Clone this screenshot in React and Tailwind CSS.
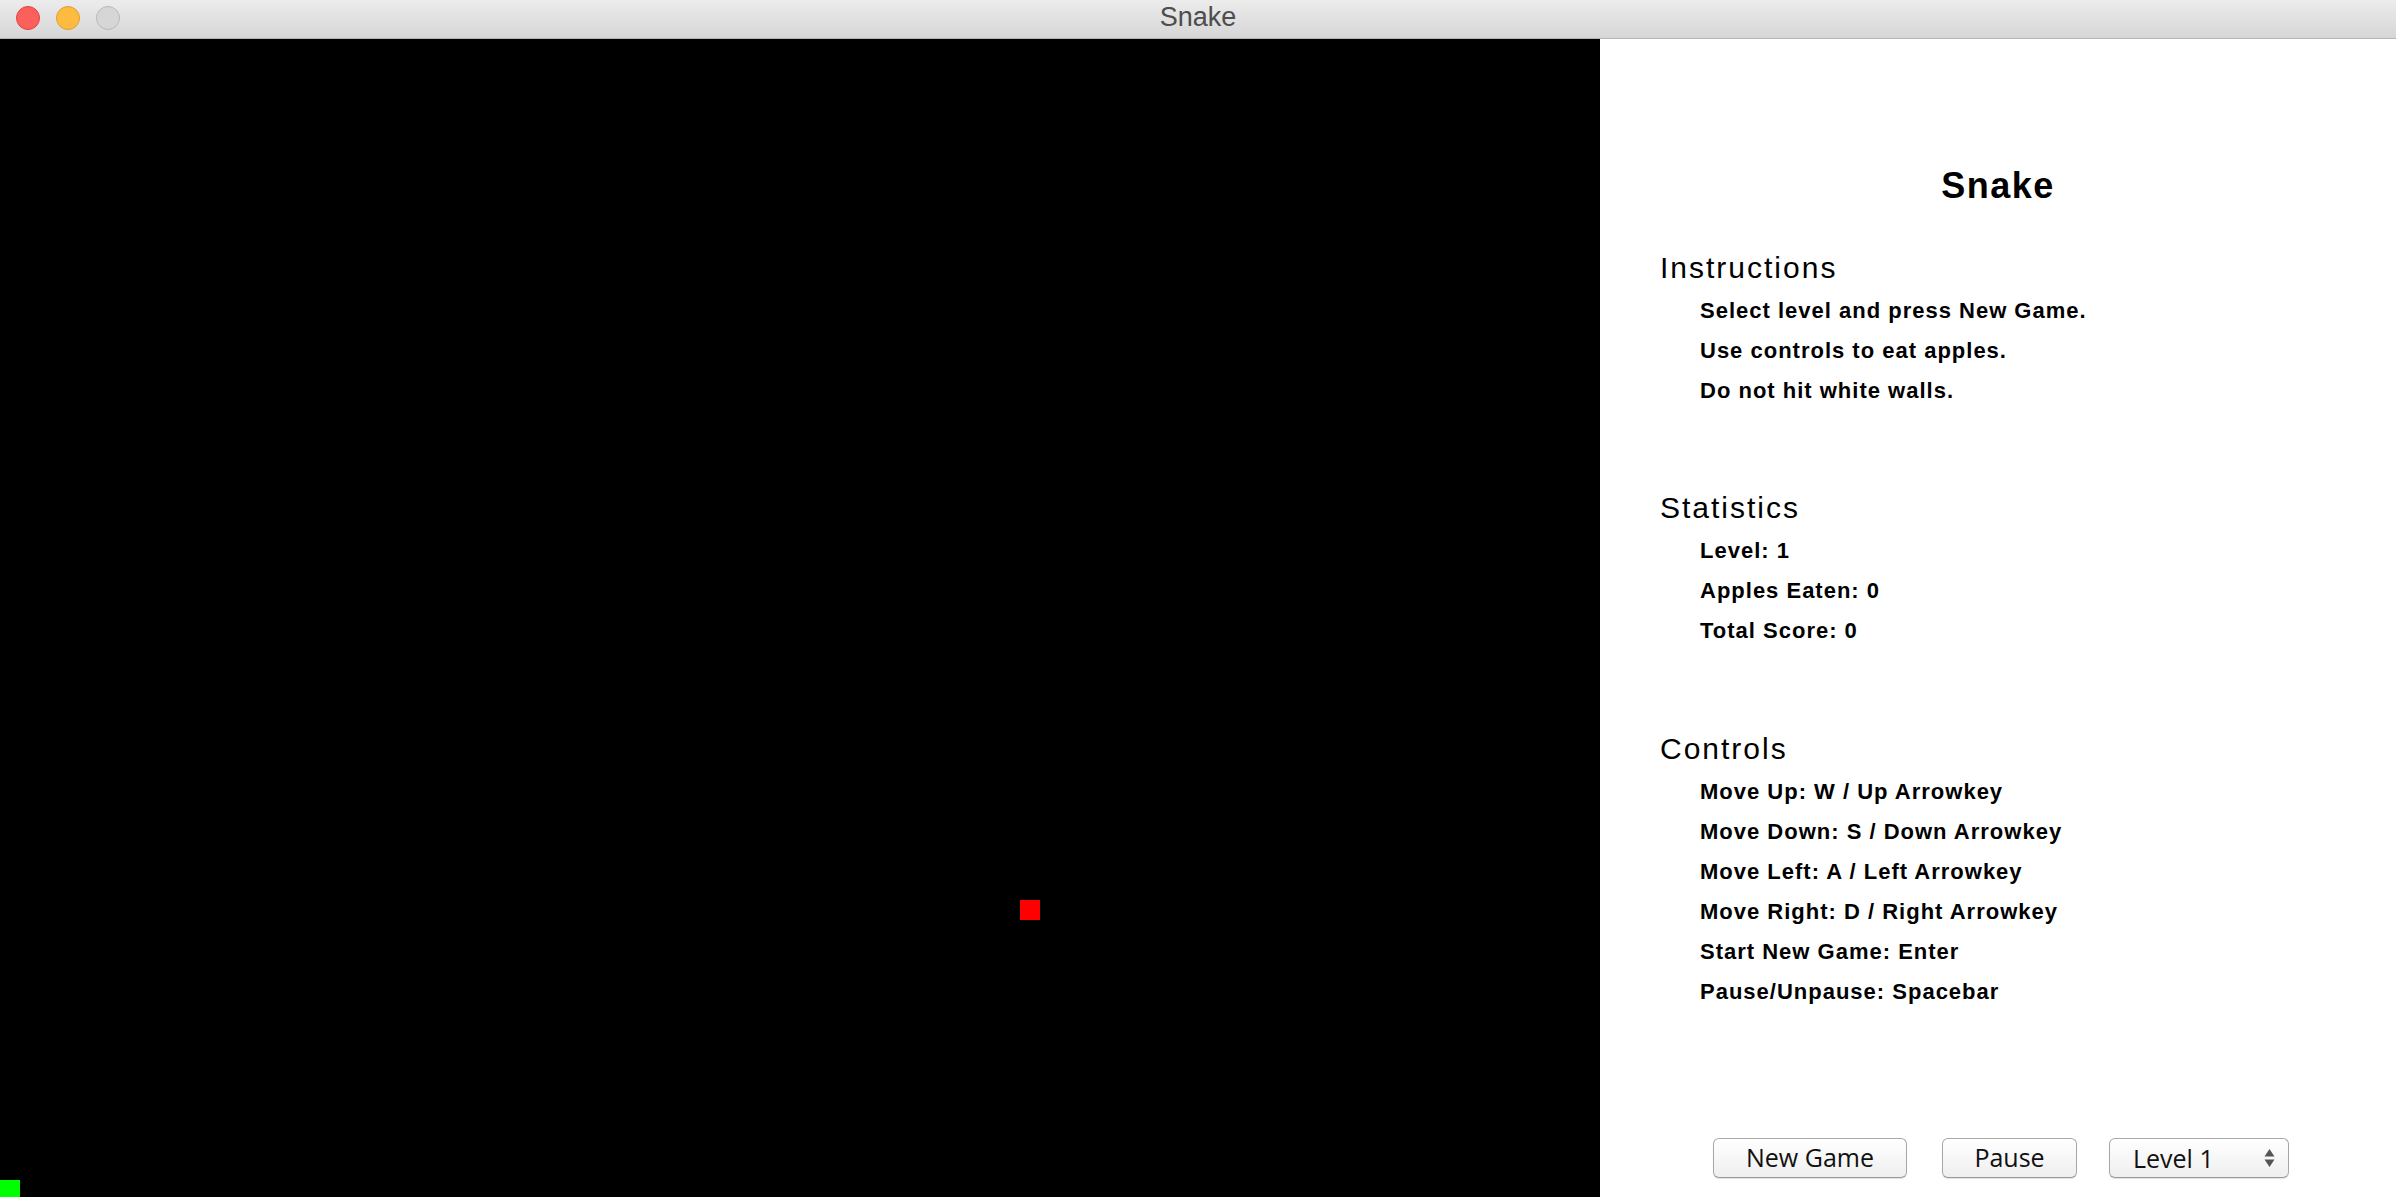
import React from "react";

const sans = { fontFamily: '"Liberation Sans", Arial, Helvetica, sans-serif' };
const btnFont = { fontFamily: '"Open Sans", "DejaVu Sans", sans-serif' };

function Section({ title, items }) {
  return (
    <div className="flex flex-col">
      <div className="text-[30px] leading-[46px] tracking-[2px] text-black">{title}</div>
      <div className="flex flex-col pl-10">
        {items.map((t) => (
          <div key={t} className="text-[22px] leading-[40px] font-bold tracking-[1px] text-black whitespace-nowrap">
            {t}
          </div>
        ))}
      </div>
    </div>
  );
}

function MacButton({ children, className = "" }) {
  return (
    <button
      className={
        "h-[40px] rounded-[6px] border border-[#a8a8a8] border-b-[#999999] bg-gradient-to-b from-white to-[#efefef] shadow-[0_1px_1px_rgba(0,0,0,0.12)] text-[25px] leading-none text-[#111] flex items-center justify-center " +
        className
      }
      style={btnFont}
    >
      {children}
    </button>
  );
}

export default function App() {
  return (
    <div className="w-[2396px] h-[1197px] flex flex-col bg-white overflow-hidden" style={sans}>
      {/* Title bar */}
      <div className="relative h-[39px] shrink-0 bg-gradient-to-b from-[#ececec] to-[#d6d6d6] border-b border-[#b4b4b4] flex items-center justify-center">
        <div className="absolute left-[16px] top-[6px] flex gap-[16px]">
          <div className="w-[24px] h-[24px] rounded-full bg-[#fc605c] border border-[#e0443e]" />
          <div className="w-[24px] h-[24px] rounded-full bg-[#fdbc40] border border-[#de9f34]" />
          <div className="w-[24px] h-[24px] rounded-full bg-[#d6d6d6] border border-[#b8b8b8]" />
        </div>
        <div className="text-[27px] leading-[35px] text-[#4d4d4d] -mt-[3px]">Snake</div>
      </div>

      {/* Body */}
      <div className="flex flex-1 min-h-0">
        {/* Game canvas */}
        <div className="relative w-[1600px] h-full bg-black overflow-hidden shrink-0">
          <div className="absolute left-[1020px] top-[861px] w-[20px] h-[20px] bg-[#ff0000]" />
          <div className="absolute left-0 top-[1141px] w-[20px] h-[20px] bg-[#00ff00]" />
        </div>

        {/* Side panel */}
        <div className="flex-1 flex flex-col bg-white">
          <div className="flex-1 flex flex-col pt-[125px] pl-[60px]">
            <div className="w-[676px] text-center text-[36px] leading-[44px] font-bold tracking-[1.5px] text-black">
              Snake
            </div>
            <div className="mt-[37px]">
              <Section
                title="Instructions"
                items={[
                  "Select level and press New Game.",
                  "Use controls to eat apples.",
                  "Do not hit white walls.",
                ]}
              />
            </div>
            <div className="mt-[74px]">
              <Section title="Statistics" items={["Level: 1", "Apples Eaten: 0", "Total Score: 0"]} />
            </div>
            <div className="mt-[75px]">
              <Section
                title="Controls"
                items={[
                  "Move Up: W / Up Arrowkey",
                  "Move Down: S / Down Arrowkey",
                  "Move Left: A / Left Arrowkey",
                  "Move Right: D / Right Arrowkey",
                  "Start New Game: Enter",
                  "Pause/Unpause: Spacebar",
                ]}
              />
            </div>
          </div>

          <div className="flex items-center pl-[113px] pb-[19px]">
            <MacButton className="w-[194px]">New Game</MacButton>
            <MacButton className="w-[135px] ml-[35px]">Pause</MacButton>
            <div
              className="ml-[32px] w-[180px] h-[40px] mt-[1px] rounded-[6px] border border-[#a8a8a8] border-b-[#999999] bg-gradient-to-b from-white to-[#efefef] shadow-[0_1px_1px_rgba(0,0,0,0.12)] flex items-center pl-[23px] pr-[13px] text-[25px] leading-none text-[#111]"
              style={btnFont}
            >
              <span className="flex-1">Level 1</span>
              <svg width="11" height="24" viewBox="0 0 11 24" className="shrink-0">
                <path d="M5.5 3 L10.5 10.5 L0.5 10.5 Z" fill="#555" />
                <path d="M0.5 13.5 L10.5 13.5 L5.5 21 Z" fill="#555" />
              </svg>
            </div>
          </div>
        </div>
      </div>
    </div>
  );
}
